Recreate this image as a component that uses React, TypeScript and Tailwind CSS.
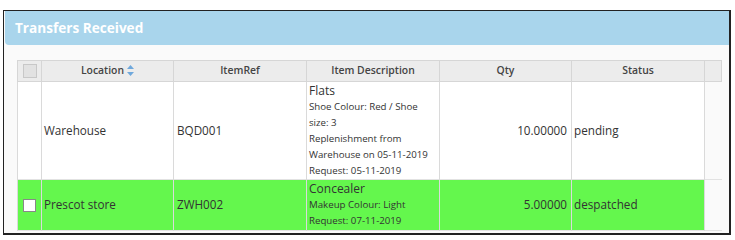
import React from "react";

type Row = {
  location: string;
  ref: string;
  title: string;
  details: string[];
  qty: string;
  status: string;
  green?: boolean;
  height: string;
};

const rows: Row[] = [
  {
    location: "Warehouse",
    ref: "BQD001",
    title: "Flats",
    details: [
      "Shoe Colour: Red / Shoe",
      "size: 3",
      "Replenishment from",
      "Warehouse on 05-11-2019",
      "Request: 05-11-2019",
    ],
    qty: "10.00000",
    status: "pending",
    height: "h-[97px]",
  },
  {
    location: "Prescot store",
    ref: "ZWH002",
    title: "Concealer",
    details: ["Makeup Colour: Light", "Request: 07-11-2019"],
    qty: "5.00000",
    status: "despatched",
    green: true,
    height: "h-[51px]",
  },
];

function SortIcon() {
  return (
    <svg width="7" height="11" viewBox="0 0 7 11" className="inline-block ml-[3px] -mt-[2px]">
      <path d="M3.5 0 L7 4 L0 4 Z" fill="#6fa8dc" />
      <path d="M3.5 11 L7 7 L0 7 Z" fill="#6fa8dc" />
    </svg>
  );
}

export default function App() {
  const font = { fontFamily: '"Open Sans", "Noto Sans", sans-serif' };
  return (
    <div className="w-[735px] h-[240px] bg-white pt-[10px] pl-[3px]" style={font}>
      <div className="w-[728px] h-[225px] overflow-hidden border-l border-t border-r-2 border-b-2 border-[#222] bg-[#fafafa] pl-px">
        <div className="h-[34px] bg-[#a9d5ec] rounded-bl-[4px] pl-[10px] flex items-center">
          <span className="text-white font-bold text-[13.6px] leading-none">Transfers Received</span>
        </div>
        <div className="pt-[15px] pl-[12px]">
          <table className="border-collapse text-[#333]">
            <thead>
              <tr className="h-[21px] bg-[#ececec] text-[10.4px] text-[#444]">
                <th className="w-[24px] border border-[#d6d6d6] p-0">
                  <div className="mx-auto w-[14px] h-[14px] bg-[#e2e2e2] border border-[#c8c8c8]" />
                </th>
                <th className="w-[132px] border border-[#d6d6d6] font-semibold">
                  Location
                  <SortIcon />
                </th>
                <th className="w-[133px] border border-[#d6d6d6] font-semibold">ItemRef</th>
                <th className="w-[133px] border border-[#d6d6d6] font-semibold">Item Description</th>
                <th className="w-[132px] border border-[#d6d6d6] font-semibold">Qty</th>
                <th className="w-[133px] border border-[#d6d6d6] font-semibold">Status</th>
                <th className="w-[17px] border border-[#d6d6d6]" />
              </tr>
            </thead>
            <tbody>
              {rows.map((r) => {
                const bg = r.green ? "bg-[#64f74d]" : "bg-white";
                const cell = `${bg} border-x border-[#dadada] align-middle p-0`;
                return (
                  <tr key={r.ref} className={`${r.height} border-b border-[#e2e2e2]`}>
                    <td className={`${cell} text-center`}>
                      {r.green ? (
                        <div className="mx-auto w-[13px] h-[13px] bg-white border border-[#888]" />
                      ) : null}
                    </td>
                    <td className={`${cell} pl-[2px] text-[11.7px]`}>{r.location}</td>
                    <td className={`${cell} pl-[3px] text-[11.7px]`}>{r.ref}</td>
                    <td className={`${bg} border-x border-[#dadada] align-top p-0 pl-[2px]`}>
                      <div className="text-[12px] leading-[17px]">{r.title}</div>
                      {r.details.map((d) => (
                        <div key={d} className="text-[9.7px] leading-[16px]">
                          {d}
                        </div>
                      ))}
                    </td>
                    <td className={`${cell} pr-[4px] text-right text-[11.7px]`}>{r.qty}</td>
                    <td className={`${cell} pl-[2px] text-[11.7px]`}>{r.status}</td>
                    <td className="p-0 bg-[#fafafa]" />
                  </tr>
                );
              })}
            </tbody>
          </table>
        </div>
      </div>
    </div>
  );
}
